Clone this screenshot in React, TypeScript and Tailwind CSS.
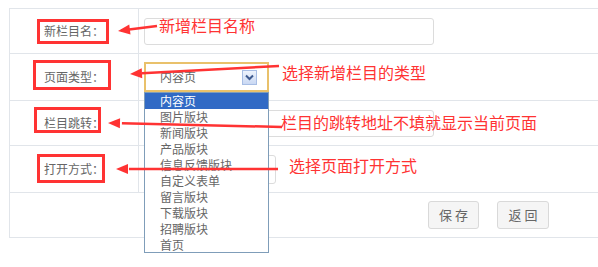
import React from 'react';

const font = { fontFamily: '"Noto Sans CJK SC", "Noto Sans", sans-serif' };

const options = ['内容页', '图片版块', '新闻版块', '产品版块', '信息反馈版块', '自定义表单', '留言版块', '下载版块', '招聘版块', '首页'];

type Arrow = { x1: number; y1: number; x2: number; y2: number };

const arrows: Arrow[] = [
  { x1: 157, y1: 26, x2: 118, y2: 31 },
  { x1: 279, y1: 66, x2: 130, y2: 74 },
  { x1: 282, y1: 127, x2: 108, y2: 123 },
  { x1: 278, y1: 169, x2: 116, y2: 169 },
];

function head(a: Arrow) {
  const dx = a.x2 - a.x1;
  const dy = a.y2 - a.y1;
  const len = Math.hypot(dx, dy);
  const ux = dx / len;
  const uy = dy / len;
  const bx = a.x2 - ux * 12;
  const by = a.y2 - uy * 12;
  return `${a.x2},${a.y2} ${bx - uy * 5},${by + ux * 5} ${bx + uy * 5},${by - ux * 5}`;
}

function Row({ label, h, children }: { label: string; h: string; children: React.ReactNode }) {
  return (
    <div className={`flex border-b border-[#e1e5ea] ${h}`}>
      <div className="w-[130px] shrink-0 border-l border-r border-[#e1e5ea] flex items-center justify-center text-[12px] text-[#666]">
        {label}
      </div>
      <div className="flex-1 flex items-center pl-[5px]">{children}</div>
    </div>
  );
}

export default function App() {
  return (
    <div className="relative w-[598px] h-[267px] overflow-hidden bg-white" style={font}>
      <div className="ml-[9px] mt-[8px] w-[600px] border-t border-[#e1e5ea]">
        <Row label="新栏目名：" h="h-[45px]">
          <div className="w-[290px] h-[27px] border border-[#dcdcdc] rounded-[3px] bg-white" />
        </Row>
        <Row label="页面类型：" h="h-[47px]">
          <div className="w-[125px] h-[30px] border-2 border-[#e9c16b] flex items-center pl-[14px] pr-[10px] justify-between text-[12px] text-[#666]">
            <span>内容页</span>
            <span className="w-[15px] h-[15px] border border-[#a7bde4] bg-gradient-to-b from-[#eef3fc] to-[#c9d8f3] flex items-center justify-center">
              <svg width="9" height="7" viewBox="0 0 9 7">
                <path d="M1 1.5 L4.5 5 L8 1.5" fill="none" stroke="#3e5a8f" strokeWidth="2" />
              </svg>
            </span>
          </div>
        </Row>
        <Row label="栏目跳转：" h="h-[45px]">
          <div className="w-[290px] h-[27px] border border-[#dcdcdc] rounded-[3px] bg-white" />
        </Row>
        <Row label="打开方式：" h="h-[47px]">
          <div className="w-[132px] h-[29px] border border-[#dcdcdc] rounded-[3px] bg-white" />
        </Row>
        <div className="h-[45px] border-l border-b border-[#e1e5ea] flex items-center pl-[418px] gap-[18px]">
          <button className="w-[51px] h-[28px] border border-[#d9d9d9] rounded-[3px] bg-[#f5f5f5] text-[13px] text-[#666]">保 存</button>
          <button className="w-[52px] h-[28px] border border-[#d9d9d9] rounded-[3px] bg-[#f5f5f5] text-[13px] text-[#666]">返 回</button>
        </div>
      </div>

      {/* open select list */}
      <ul className="absolute left-[144px] top-[92px] w-[125px] h-[161px] border border-[#7f9db9] bg-white text-[12px] text-[#666]">
        {options.map((o, i) => (
          <li
            key={o}
            className={`h-[16px] leading-[16px] pl-[15px] ${i === 0 ? 'bg-[#316ac5] text-white' : ''}`}
          >
            {o}
          </li>
        ))}
      </ul>

      {/* annotations */}
      <div className="absolute left-[37px] top-[19px] w-[72px] h-[25px] border-[3px] border-[#f33]" />
      <div className="absolute left-[33px] top-[60px] w-[78px] h-[30px] border-[3px] border-[#f33]" />
      <div className="absolute left-[34px] top-[107px] w-[67px] h-[26px] border-[3px] border-[#f33]" />
      <div className="absolute left-[37px] top-[154px] w-[68px] h-[29px] border-[3px] border-[#f33]" />

      <svg className="absolute left-0 top-0 pointer-events-none" width="598" height="267">
        {arrows.map((a, i) => (
          <g key={i}>
            <line x1={a.x1} y1={a.y1} x2={a.x2 + (a.x1 - a.x2) * 0.08} y2={a.y2 + (a.y1 - a.y2) * 0.08} stroke="#f33" strokeWidth="2.5" />
            <polygon points={head(a)} fill="#f33" />
          </g>
        ))}
      </svg>

      <div className="absolute left-[159px] top-[16px] text-[16px] leading-[18px] text-[#f33]">新增栏目名称</div>
      <div className="absolute left-[282px] top-[63px] text-[16px] leading-[18px] text-[#f33]">选择新增栏目的类型</div>
      <div className="absolute left-[281px] top-[113px] text-[16px] leading-[18px] text-[#f33]">栏目的跳转地址不填就显示当前页面</div>
      <div className="absolute left-[289px] top-[156px] text-[16px] leading-[18px] text-[#f33]">选择页面打开方式</div>
    </div>
  );
}
